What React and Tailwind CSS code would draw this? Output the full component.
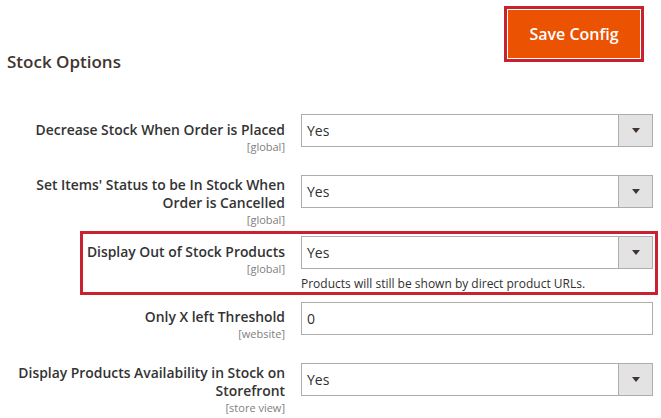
import React from "react";

function Arrow() {
  return (
    <svg width="8" height="5" viewBox="0 0 8 5">
      <path d="M0 0h8L4 5z" fill="#41362f" />
    </svg>
  );
}

function Select({ value }) {
  return (
    <div className="flex h-[33px] w-[352px] border border-[#adadad] bg-white">
      <div className="flex flex-1 items-center pl-[5px] text-[14px] text-[#303030]">{value}</div>
      <div className="flex w-[34px] items-center justify-center border-l border-[#adadad] bg-[#e3e3e3]">
        <Arrow />
      </div>
    </div>
  );
}

function Input({ value }) {
  return (
    <div className="flex h-[33px] w-[352px] items-center border border-[#adadad] bg-white pl-[5px] text-[14px] text-[#303030]">
      {value}
    </div>
  );
}

function Row({ label, scope, pt, className, children, highlight }) {
  return (
    <div className={`relative flex ${className}`}>
      <div className={`ml-[10px] w-[275px] text-right ${pt}`}>
        <div className="text-[13.9px] leading-[18px] font-semibold text-[#333333]">{label}</div>
        <div className="text-[11px] leading-[16px] text-[#808080]">{scope}</div>
      </div>
      <div className="ml-[16px] w-[352px]">{children}</div>
      {highlight && (
        <div className="pointer-events-none absolute top-[-5px] bottom-[-3px] left-[80px] right-[3px] border-[3px] border-[#c9222e]" />
      )}
    </div>
  );
}

export default function App() {
  return (
    <div className="h-[418px] w-[661px] overflow-hidden bg-white font-['Open_Sans',sans-serif]">
      <div className="flex items-start justify-between">
        <h1 className="pl-[7px] pt-[51px] text-[17px] leading-[22px] font-semibold text-[#41362f]">Stock Options</h1>
        <div className="mr-[17px] mt-[6px] border-[3px] border-[#c9222e] p-[1px]">
          <button className="flex h-[48px] w-[132px] items-center justify-center bg-[#eb5202] text-[16px] font-semibold text-white">
            Save Config
          </button>
        </div>
      </div>

      <Row className="mt-[41px]" pt="pt-[7px]" label="Decrease Stock When Order is Placed" scope="[global]">
        <Select value="Yes" />
      </Row>

      <Row
        className="mt-[20px]"
        pt="pt-[1px]"
        label={
          <>
            Set Items' Status to be In Stock When
            <br />
            Order is Cancelled
          </>
        }
        scope="[global]"
      >
        <Select value="Yes" />
      </Row>

      <Row className="mt-[8px]" pt="pt-[7px]" label="Display Out of Stock Products" scope="[global]" highlight>
        <Select value="Yes" />
        <div className="mt-[7px] text-[12px] leading-[16px] text-[#303030]">
          Products will still be shown by direct product URLs.
        </div>
      </Row>

      <Row className="mt-[10px]" pt="pt-[6px]" label="Only X left Threshold" scope="[website]">
        <Input value="0" />
      </Row>

      <Row
        className="mt-[21px]"
        pt="pt-[1px]"
        label={
          <>
            Display Products Availability in Stock on
            <br />
            Storefront
          </>
        }
        scope="[store view]"
      >
        <Select value="Yes" />
      </Row>
    </div>
  );
}
